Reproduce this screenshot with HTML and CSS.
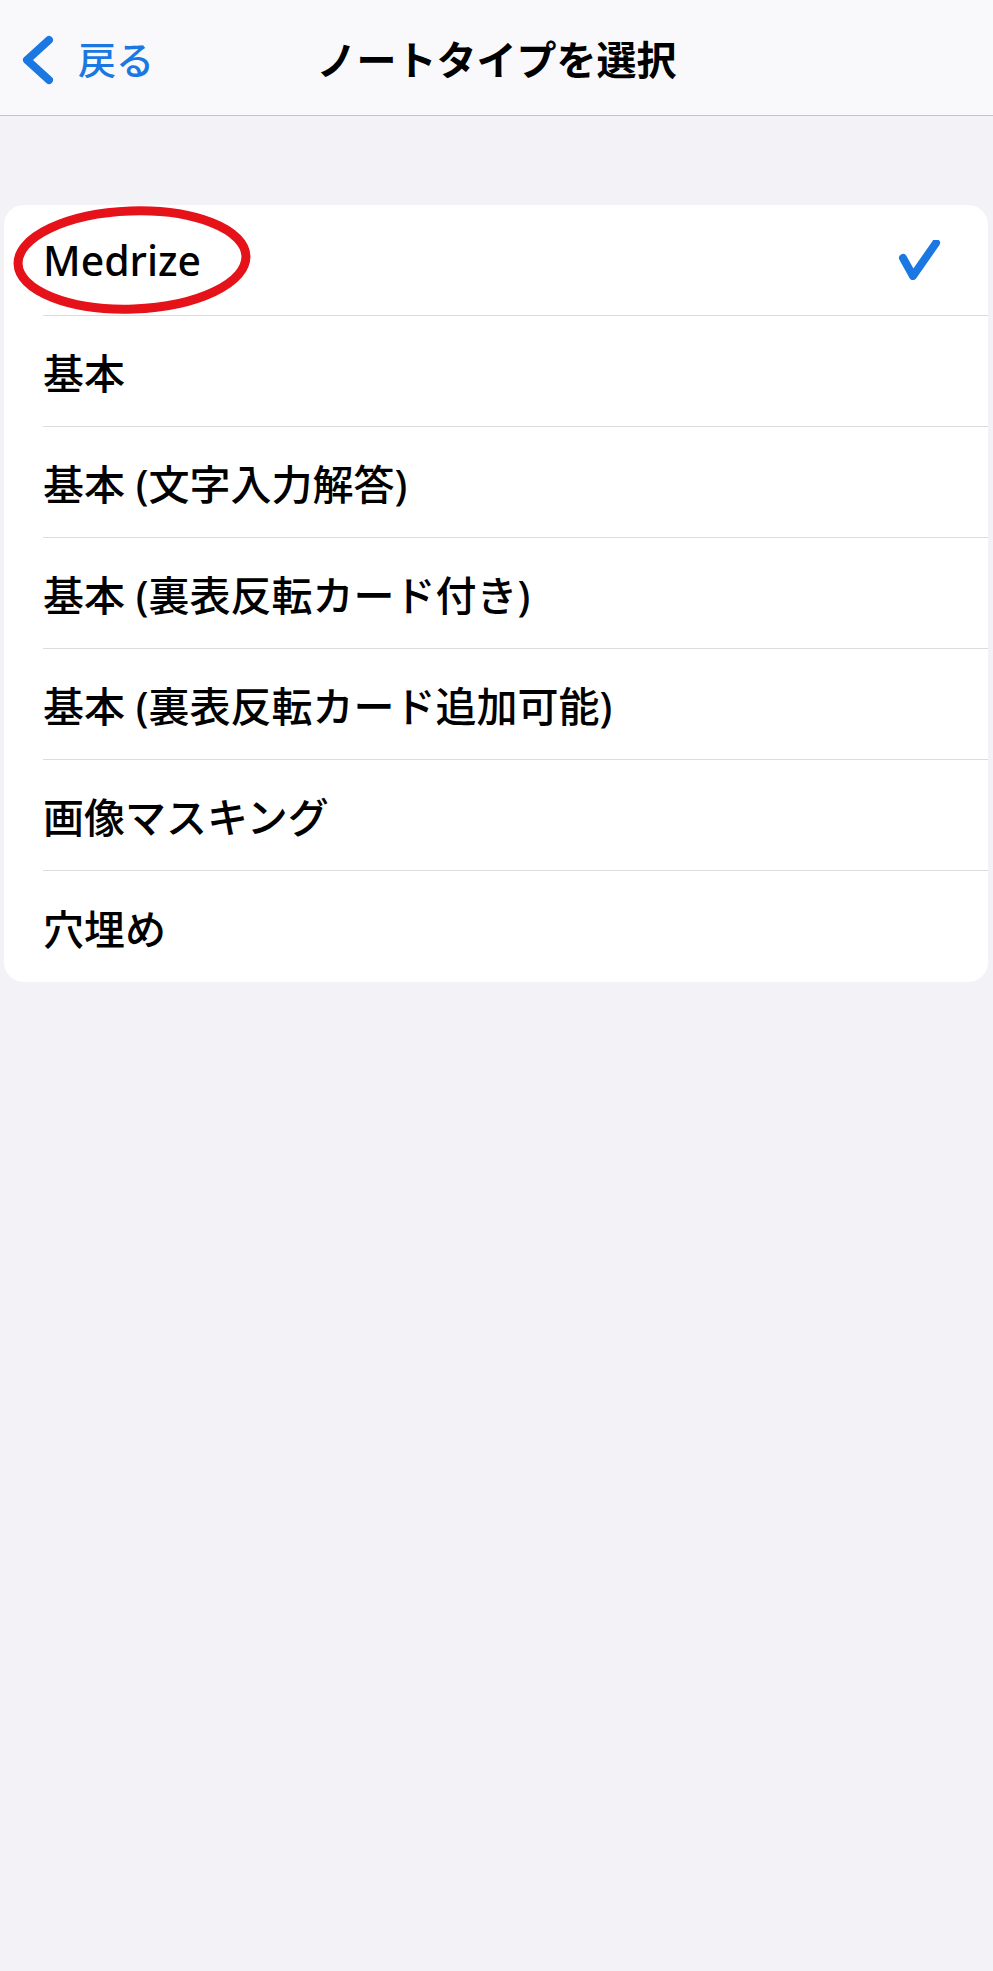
FILE: index.html
```html
<!DOCTYPE html>
<html lang="ja">
<head>
    <meta charset="UTF-8">
    <meta name="viewport" content="width=device-width, initial-scale=1.0">
    <title>ノートタイプを選択</title>
    <link rel="stylesheet" href="styles.css">
</head>
<body>

<header class="navbar">
    <a href="#" class="back-link">
        <svg class="back-icon" width="36" height="56" viewBox="0 0 36 56">
            <polyline points="29,9 7,29 29,49" fill="none" stroke="currentColor" stroke-width="8" stroke-linecap="round" stroke-linejoin="round"/>
        </svg>
        <span>戻る</span>
    </a>
    <h1 class="nav-title">ノートタイプを選択</h1>
    <div></div>
</header>

<ul class="type-list">
    <li class="type-row selected">
        <span class="type-name">Medrize</span>
        <svg class="check-icon" width="44" height="40" viewBox="0 0 44 40">
            <polyline points="5,18 15,36 38,3" fill="none" stroke="currentColor" stroke-width="8" stroke-linecap="round" stroke-linejoin="round"/>
        </svg>
        <!-- red marker drawn over the screenshot -->
        <svg class="marker" width="248" height="116" viewBox="0 0 248 116">
            <ellipse cx="124" cy="58" rx="114" ry="49" fill="none" stroke="#e5121a" stroke-width="9"/>
        </svg>
    </li>
    <li class="type-row"><span class="type-name">基本</span></li>
    <li class="type-row"><span class="type-name">基本 (文字入力解答)</span></li>
    <li class="type-row"><span class="type-name">基本 (裏表反転カード付き)</span></li>
    <li class="type-row"><span class="type-name">基本 (裏表反転カード追加可能)</span></li>
    <li class="type-row"><span class="type-name">画像マスキング</span></li>
    <li class="type-row"><span class="type-name">穴埋め</span></li>
</ul>

</body>
</html>
```

FILE: styles.css
```css
body {
    font-family: "Noto Sans", "Noto Sans CJK JP", sans-serif;
    margin: 0;
    background-color: #f2f2f7;
    color: #000;
    min-height: 1971px;
}
.navbar {
    display: grid;
    grid-template-columns: 1fr auto 1fr;
    align-items: center;
    height: 115px;
    background-color: #f9f9fb;
    border-bottom: 1px solid #c4c4c6;
}
.back-link {
    display: flex;
    align-items: center;
    gap: 22px;
    padding-left: 20px;
    color: #1b78e2;
    text-decoration: none;
    font-size: 38px;
    font-weight: 500;
}
.back-icon {
    margin-top: 2px;
}
.nav-title {
    margin: 0;
    font-size: 40px;
    font-weight: 700;
}
.type-list {
    list-style: none;
    margin: 89px 5px 0 4px;
    padding: 0 0 0 39px;
    background-color: #fff;
    border-radius: 20px;
    position: relative;
}
.type-row {
    display: flex;
    align-items: center;
    height: 110px;
    border-bottom: 1px solid #dcdcdf;
    font-size: 41px;
    font-weight: 500;
}
.type-row:last-child {
    border-bottom: none;
    height: 111px;
}
.selected {
    position: relative;
}
.check-icon {
    margin-left: auto;
    margin-right: 46px;
    color: #1b78e2;
}
.marker {
    position: absolute;
    left: -35px;
    top: -3px;
    transform: rotate(-2deg);
}
```
